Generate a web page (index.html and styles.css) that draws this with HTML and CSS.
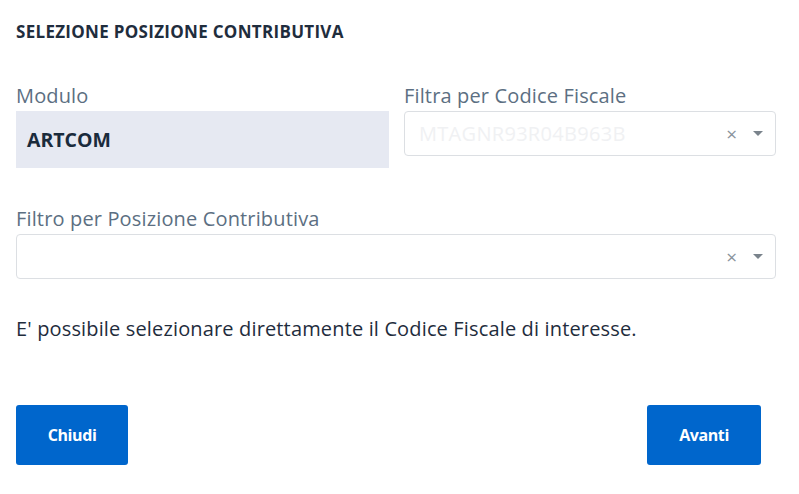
FILE: index.html
```html
<!DOCTYPE html>
<html lang="it">
<head>
<meta charset="utf-8">
<title>Selezione posizione contributiva</title>
<link rel="stylesheet" href="styles.css">
</head>
<body>
<div class="modal">
  <h1 class="title">SELEZIONE POSIZIONE CONTRIBUTIVA</h1>
  <div class="row two">
    <div class="field">
      <label class="label">Modulo</label>
      <div class="readonly">ARTCOM</div>
    </div>
    <div class="field">
      <label class="label">Filtra per Codice Fiscale</label>
      <div class="select">
        <span class="value">MTAGNR93R04B963B</span>
        <span class="clear">×</span>
        <span class="arrow"></span>
      </div>
    </div>
  </div>
  <div class="row">
    <div class="field">
      <label class="label">Filtro per Posizione Contributiva</label>
      <div class="select">
        <span class="value"></span>
        <span class="clear">×</span>
        <span class="arrow"></span>
      </div>
    </div>
  </div>
  <p class="note">E' possibile selezionare direttamente il Codice Fiscale di interesse.</p>
  <div class="footer">
    <button class="btn">Chiudi</button>
    <button class="btn">Avanti</button>
  </div>
</div>
</body>
</html>
```
FILE: styles.css
```css
* { box-sizing: border-box; }
html, body { margin: 0; padding: 0; background: #fff; }
body {
  font-family: "Open Sans", "Liberation Sans", sans-serif;
  color: #1a2b3c;
}
.modal {
  width: 799px;
  padding: 20px 23px 0 16px;
}
.title {
  margin: 0;
  font-size: 17px;
  font-weight: 700;
  color: #1f2d3d;
  line-height: 24px;
  letter-spacing: 0.3px;
}
.row {
  margin-top: 41px;
}
.row + .row { margin-top: 40px; }
.two {
  display: grid;
  grid-template-columns: 373px 372px;
  column-gap: 15px;
}
.field { display: flex; flex-direction: column; }
.label {
  font-size: 20px;
  color: #5c6f82;
  line-height: 22px;
  margin-bottom: 4px;
  letter-spacing: 0.15px;
}
.readonly {
  height: 57px;
  background: #e6e9f2;
  display: flex;
  align-items: center;
  padding-left: 11px;
  font-size: 19.5px;
  font-weight: 700;
  color: #1a2b3c;
}
.select {
  height: 45px;
  border: 1px solid #dcdfe3;
  border-radius: 4px;
  display: flex;
  align-items: center;
  padding: 0 12px 0 14px;
}
.value {
  flex: 1;
  color: #f0f1f3;
  font-size: 20px;
  letter-spacing: 0.3px;
}
.clear {
  color: #8a939c;
  font-size: 19px;
  margin-right: 16px;
}
.arrow {
  width: 0; height: 0;
  border-left: 5px solid transparent;
  border-right: 5px solid transparent;
  border-top: 5px solid #7a838c;
}
.note {
  margin: 38px 0 0;
  font-size: 20px;
  color: #1f2d3d;
  line-height: 24px;
  letter-spacing: 0.15px;
}
.footer {
  margin-top: 64px;
  display: flex;
  justify-content: space-between;
  padding-right: 15px;
}
.btn {
  height: 60px;
  padding: 0;
  background: #0066cc;
  color: #fff;
  border: none;
  border-radius: 3px;
  font-family: inherit;
  font-weight: 700;
  font-size: 16px;
  letter-spacing: -0.4px;
}
.btn:first-child { width: 112px; }
.btn:last-child { width: 114px; }
```
